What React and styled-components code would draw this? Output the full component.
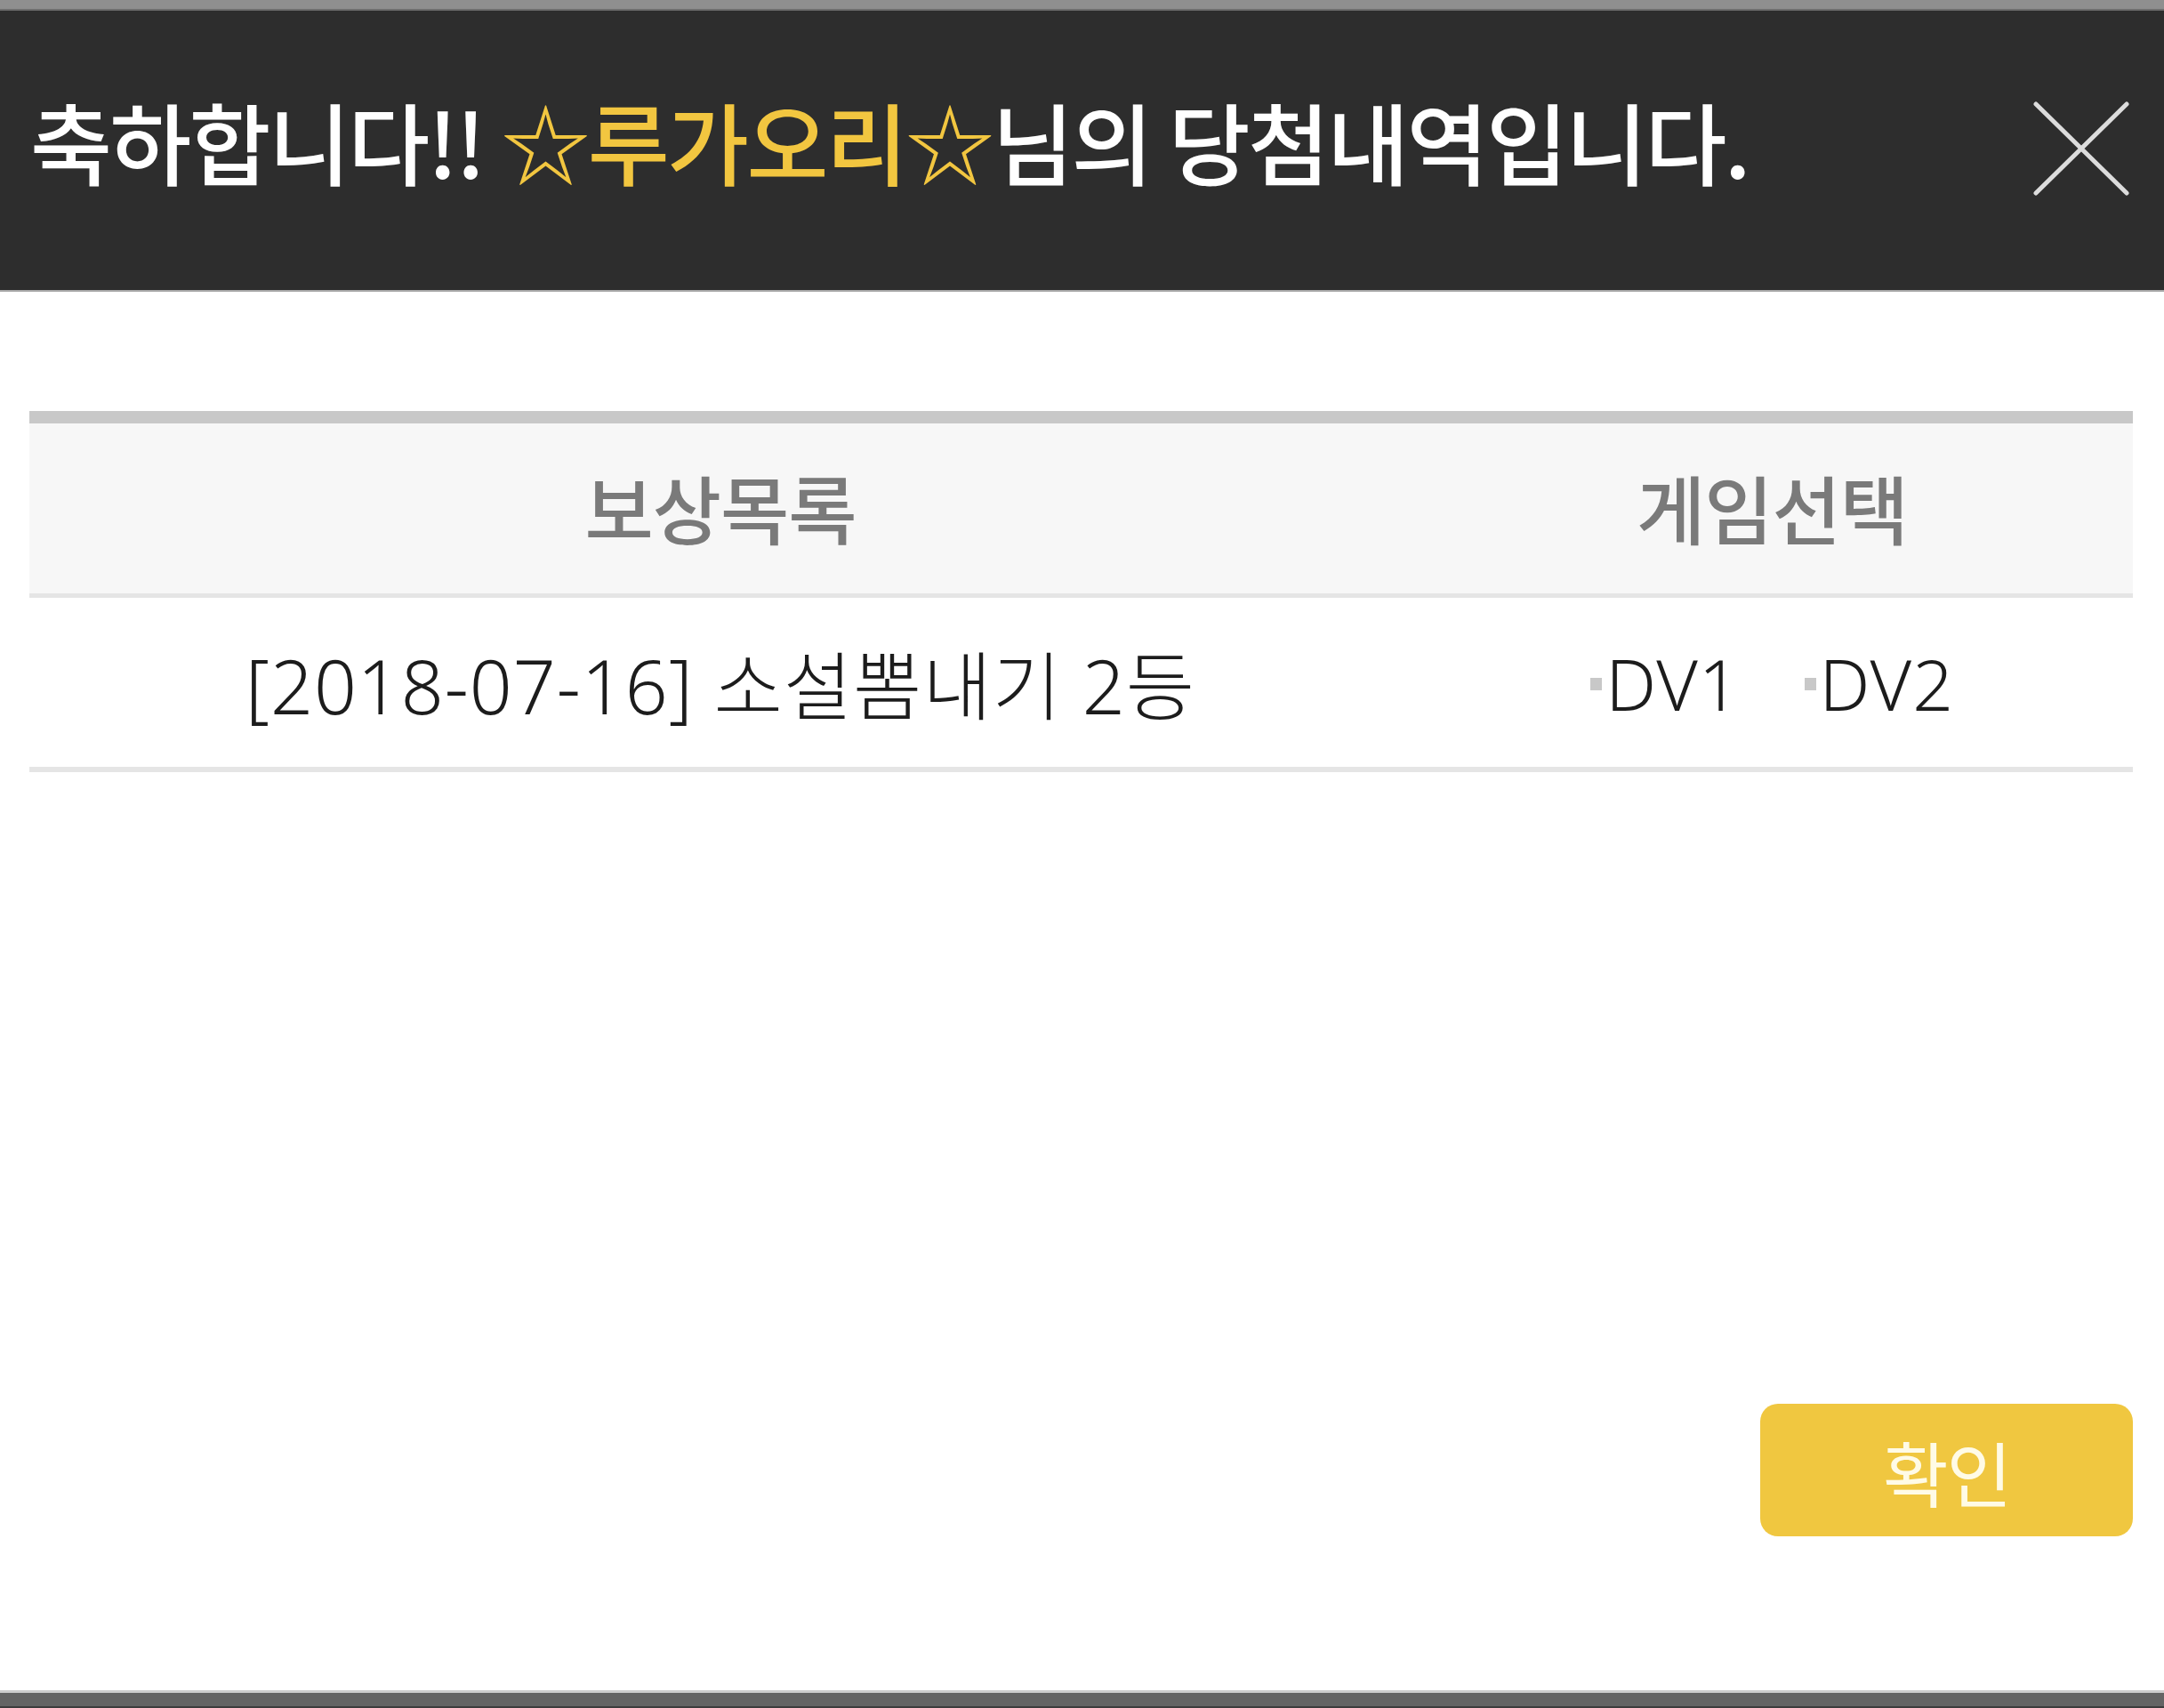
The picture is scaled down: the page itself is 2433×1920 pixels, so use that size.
import React from "react";
import styled, { createGlobalStyle } from "styled-components";

const GlobalStyle = createGlobalStyle`
  body {
    margin: 0;
    background: #ffffff;
    font-family: "Noto Sans", "Noto Sans CJK KR", sans-serif;
  }
`;

const Page = styled.div`
  display: flex;
  flex-direction: column;
  height: 1920px;
  background: #ffffff;
`;

const TopStrip = styled.div`
  height: 10px;
  background: #8f8f8f;
  border-bottom: 2px solid #6e6e6e;
`;

const Header = styled.header`
  height: 314px;
  display: flex;
  align-items: center;
  justify-content: space-between;
  padding: 0 36px 0 34px;
  background: #2d2d2d;
  border-bottom: 2px solid #a9a9a9;
`;

const Title = styled.h1`
  margin: 0 0 24px 0;
  font-family: "Noto Sans CJK KR", sans-serif;
  font-size: 100px;
  font-weight: 500;
  letter-spacing: -2.7px;
  color: #ffffff;
  white-space: nowrap;

  span {
    color: #f2c640;
  }
`;

const CloseButton = styled.button`
  width: 112px;
  height: 112px;
  padding: 0;
  border: none;
  background: transparent;
  cursor: pointer;
`;

const Body = styled.main`
  flex: 1;
  display: flex;
  flex-direction: column;
  padding: 134px 35px 0 33px;
`;

const Table = styled.div`
  border-top: 14px solid #c8c8c8;
`;

const Row = styled.div`
  display: grid;
  grid-template-columns: 1554px 1fr;
  align-items: center;
  height: ${({ $head }) => ($head ? "191px" : "190px")};
  background: ${({ $head }) => ($head ? "#f7f7f7" : "#ffffff")};
  border-bottom: ${({ $head }) => ($head ? "5px" : "6px")} solid #e5e5e5;
`;

const HeadCell = styled.div`
  text-align: center;
  font-family: "Noto Sans CJK KR", sans-serif;
  font-size: 84px;
  font-weight: 500;
  letter-spacing: -1px;
  color: #7a7a7a;
  padding-bottom: 4px;
`;

const Cell = styled.div`
  display: flex;
  justify-content: center;
  align-items: center;
  gap: 72px;
  font-size: 84px;
  font-weight: 300;
  letter-spacing: 1px;
  color: #1c1c1c;
`;

const Game = styled.label`
  display: flex;
  align-items: center;
  font-size: 80px;
  letter-spacing: 1px;

  &::before {
    content: "";
    width: 13px;
    height: 14px;
    margin-right: 4px;
    margin-top: 4px;
    background: #c8c8c8;
  }
`;

const Actions = styled.div`
  margin-top: auto;
  display: flex;
  justify-content: flex-end;
  padding-bottom: 173px;
`;

const ConfirmButton = styled.button`
  width: 419px;
  height: 149px;
  border: none;
  border-radius: 20px;
  background: #f0c740;
  color: #fffbe6;
  font-family: "Noto Sans CJK KR", sans-serif;
  font-size: 80px;
  font-weight: 400;
  letter-spacing: -2px;
  cursor: pointer;
`;

const BottomBar = styled.div`
  height: 15px;
  background: #646464;
  border-top: 3px solid #cdcdcd;
  border-bottom: 2px solid #3c3c3c;
`;

const CloseIcon = () => (
  <svg width="112" height="112" viewBox="0 0 112 112">
    <path
      d="M4 4 L106 104 M106 4 L4 104"
      stroke="#dcdcdc"
      strokeWidth="5"
      strokeLinecap="round"
    />
  </svg>
);

const App = () => {
  return (
    <>
      <GlobalStyle />
      <Page>
        <TopStrip />
        <Header>
          <Title>
            축하합니다!! <span>☆루가오리☆</span>님의 당첨내역입니다.
          </Title>
          <CloseButton aria-label="닫기">
            <CloseIcon />
          </CloseButton>
        </Header>
        <Body>
          <Table>
            <Row $head>
              <HeadCell>보상목록</HeadCell>
              <HeadCell>게임선택</HeadCell>
            </Row>
            <Row>
              <Cell>[2018-07-16] 소설뽐내기 2등</Cell>
              <Cell>
                <Game>DV1</Game>
                <Game>DV2</Game>
              </Cell>
            </Row>
          </Table>
          <Actions>
            <ConfirmButton>확인</ConfirmButton>
          </Actions>
        </Body>
        <BottomBar />
      </Page>
    </>
  );
};

export default App;
